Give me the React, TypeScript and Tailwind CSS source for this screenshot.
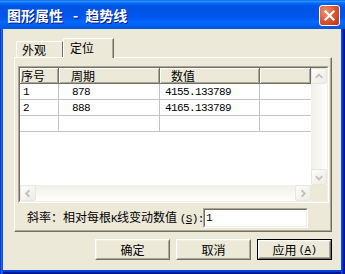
const MONO = "font-['Liberation_Mono',monospace] text-[11px] tracking-[-0.6px]";

function Chevron({ dir }: { dir: 'up' | 'down' | 'left' | 'right' }) {
  const pts = {
    up: '4,9 7.5,5.5 11,9',
    down: '4,6 7.5,9.5 11,6',
    left: '9,4 5.5,7.5 9,11',
    right: '6,4 9.5,7.5 6,11',
  }[dir];
  return (
    <svg width="15" height="15" viewBox="0 0 15 15">
      <polyline points={pts} fill="none" stroke="#C4C2B6" strokeWidth="2" />
    </svg>
  );
}

function ScrollBtn({ dir }: { dir: 'up' | 'down' | 'left' | 'right' }) {
  return (
    <div className="w-[16px] h-[16px] flex items-center justify-center rounded-[2px] border border-[#E8E6DD] bg-[linear-gradient(135deg,#FDFDFB,#ECEBE4)]">
      <Chevron dir={dir} />
    </div>
  );
}

function TitleBar() {
  return (
    <div className="h-[29px] shrink-0 flex items-center pl-[7px] pr-[5px] bg-[linear-gradient(180deg,#0058ee_0%,#3593ff_4%,#288eff_6%,#127dff_8%,#036ffc_10%,#0262ee_14%,#0057e5_20%,#0054e3_24%,#0055eb_56%,#005bf5_66%,#026afe_76%,#0062ef_86%,#0055de_100%)]">
      <div className="flex items-center text-white font-bold text-[14px] leading-[16px] mt-[1px] [text-shadow:1px_1px_0_#0a1883]">
        <span>图形属性</span>
        <span className="ml-[10px] mr-[7px]">-</span>
        <span>趋势线</span>
      </div>
      <div className="ml-auto mt-[1px] w-[21px] h-[21px] rounded-[3px] border border-white bg-[radial-gradient(circle_at_30%_30%,#F0906F,#D9502B_55%,#B8361A)] flex items-center justify-center">
        <svg width="13" height="13" viewBox="0 0 13 13">
          <path d="M2.5 2.5 L10.5 10.5 M10.5 2.5 L2.5 10.5" stroke="white" strokeWidth="2.2" strokeLinecap="square" />
        </svg>
      </div>
    </div>
  );
}

const rows = [
  { id: '1', period: '878', value: '4155.133789' },
  { id: '2', period: '888', value: '4165.133789' },
  { id: '', period: '', value: '' },
];

function Grid() {
  const head = 'h-[16px] shrink-0 bg-[#ECE9D8] border-r border-b border-r-[#716F64] border-b-[#716F64] shadow-[inset_1px_1px_white,inset_-1px_-1px_#ACA899] flex items-center leading-[14px]';
  const cell = 'h-[16px] shrink-0 border-r border-b border-[#C4C4C4] flex items-center';
  return (
    <div className="flex-1 bg-white overflow-hidden">
      <div className="flex">
        <div className={`${head} w-[39px] pl-[1px]`}>序号</div>
        <div className={`${head} w-[101px] pl-[12px]`}>周期</div>
        <div className={`${head} w-[100px] pl-[11px]`}>数值</div>
        <div className={`${head} flex-1`} />
      </div>
      {rows.map((r, i) => (
        <div key={i} className={`flex ${MONO} leading-[12px]`}>
          <div className={`${cell} w-[39px] pl-[3px]`}>{r.id}</div>
          <div className={`${cell} w-[101px] pl-[13px]`}>{r.period}</div>
          <div className={`${cell} w-[100px] pl-[5px]`}>{r.value}</div>
          <div className="h-[16px] flex-1 border-b border-[#C4C4C4]" />
        </div>
      ))}
    </div>
  );
}

function Btn({ children, def }: { children: React.ReactNode; def?: boolean }) {
  const inner = (
    <div className="w-full h-full border border-t-white border-l-white border-r-[#716F64] border-b-[#716F64]">
      <div className="w-full h-full border border-t-[#F1EFE2] border-l-[#F1EFE2] border-r-[#ACA899] border-b-[#ACA899] flex items-center justify-center leading-[14px]">
        {children}
      </div>
    </div>
  );
  return (
    <div className={`w-[75px] h-[21px] ${def ? 'border border-black' : ''}`}>{inner}</div>
  );
}

export default function App() {
  return (
    <div className="w-[345px] h-[274px] flex flex-col bg-[#ECE9D8] font-['Noto_Sans_CJK_SC',sans-serif] text-[12px] text-black select-none">
      <TitleBar />
      <div className="flex-1 flex flex-col pl-[3px] pr-[4px] pb-[4px] shadow-[inset_1px_0_#0831d9,inset_2px_0_#166aee,inset_3px_0_#0855dd,inset_-1px_0_#00138c,inset_-2px_0_#001ea0,inset_-3px_0_#003bda,inset_-4px_0_#0847e0,inset_0_-1px_#00138c,inset_0_-2px_#001ea0,inset_0_-3px_#003bda,inset_0_-4px_#0847e0]">
        {/* tabs */}
        <div className="flex items-end h-[19px] mt-[9px] pl-[13px]">
          <div className="w-[47px] h-[16px] border-t border-l border-r border-t-white border-l-white border-r-[#716F64] rounded-tl-[2px] flex items-center pl-[5px] leading-[14px]">
            外观
          </div>
          <div className="relative z-10 w-[51px] h-[20px] -mb-[1px] bg-[#ECE9D8] border-t border-l border-r border-t-white border-l-white border-r-[#716F64] rounded-tl-[2px] shadow-[inset_-1px_0_#ACA899] flex items-start pt-[2px] pl-[6px] leading-[14px]">
            定位
          </div>
        </div>
        {/* panel */}
        <div className="ml-[11px] w-[318px] h-[175px] border border-t-white border-l-white border-r-[#716F64] border-b-[#716F64] shadow-[inset_-1px_-1px_#ACA899] flex flex-col">
          <div className="ml-[3px] mt-[8px] w-[311px] h-[137px] border border-t-[#ACA899] border-l-[#ACA899] border-r-white border-b-white">
            <div className="w-full h-full border border-t-[#716F64] border-l-[#716F64] border-r-[#F1EFE2] border-b-[#F1EFE2] flex flex-col">
              <div className="flex-1 flex min-h-0">
                <Grid />
                <div className="w-[16px] flex flex-col justify-between bg-[linear-gradient(90deg,#F1EFE8,#FEFEFB)]">
                  <ScrollBtn dir="up" />
                  <ScrollBtn dir="down" />
                </div>
              </div>
              <div className="h-[16px] flex">
                <div className="flex-1 flex justify-between bg-[linear-gradient(180deg,#F1EFE8,#FEFEFB)]">
                  <ScrollBtn dir="left" />
                  <ScrollBtn dir="right" />
                </div>
                <div className="w-[16px] bg-[#ECE9D8]" />
              </div>
            </div>
          </div>
          <div className="flex items-center mt-[5px] h-[20px]">
            <div className="w-[188px] pl-[12px] leading-[14px] whitespace-nowrap">
              斜率：相对每根<span className={MONO}>K</span>线变动数值 <span className={MONO}>(<span className="underline">S</span>):</span>
            </div>
            <div className="w-[105px] h-[20px] border border-t-[#ACA899] border-l-[#ACA899] border-r-white border-b-white">
              <div className={`w-full h-full border border-t-[#716F64] border-l-[#716F64] border-r-[#F1EFE2] border-b-[#F1EFE2] bg-white flex items-center pl-[1px] ${MONO}`}>
                1
              </div>
            </div>
          </div>
        </div>
        {/* buttons */}
        <div className="flex justify-end gap-[6px] mt-[7px] pr-[9px]">
          <Btn>确定</Btn>
          <Btn>取消</Btn>
          <Btn def>
            应用 <span className={`${MONO} ml-[2px]`}>(<span className="underline">A</span>)</span>
          </Btn>
        </div>
      </div>
    </div>
  );
}
